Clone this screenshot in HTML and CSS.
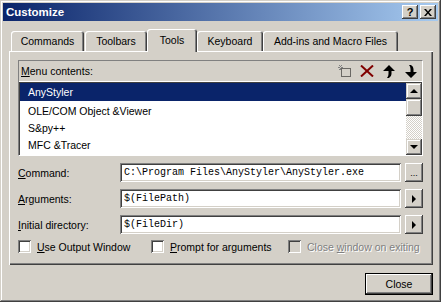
FILE: index.html
```html
<!DOCTYPE html>
<html lang="en">
  <head>
    <meta charset="UTF-8" />
    <title>Customize</title>
    <link rel="stylesheet" href="styles.css">
  </head>
  <body>
    <div class="window">
      <div class="titlebar">
        <span class="title">Customize</span>
        <div class="caption-btns">
          <span class="cap-btn help">?</span>
          <span class="cap-btn">
            <svg width="8" height="7" viewBox="0 0 8 7">
              <path d="M0 0h2l2 2.5L6 0h2L5 3.5 8 7H6L4 4.5 2 7H0l3-3.5z" fill="#000" />
            </svg>
          </span>
        </div>
      </div>

      <div class="client">
        <div class="tabs">
          <div class="tab tab-commands">Commands</div>
          <div class="tab tab-toolbars">Toolbars</div>
          <div class="tab tab-tools active">Tools</div>
          <div class="tab tab-keyboard">Keyboard</div>
          <div class="tab tab-addins">Add-ins and Macro Files</div>
        </div>

        <div class="panel">
          <div class="frame">
            <div class="frame-head">
              <span class="frame-label"><u>M</u>enu contents:</span>
              <div class="tools">
                <span class="tool">
                  <svg width="14" height="12" viewBox="0 0 14 12">
                    <rect x="3.5" y="3.5" width="9" height="8" fill="none" stroke="#000" stroke-dasharray="1 1" />
                    <path d="M1 0.5h1M3 0.5h1M2.5 1v1M0 2.5h2M3 2.5h2M2.5 3v2M1 4.5h1" stroke="#808080" />
                  </svg>
                </span>
                <span class="tool">
                  <svg width="14" height="12" viewBox="0 0 14 12">
                    <path d="M1 0.5l12 11M13 0.5l-12 11" stroke="#800000" stroke-width="2" />
                  </svg>
                </span>
                <span class="tool">
                  <svg width="12" height="13" viewBox="0 0 12 13">
                    <path d="M6 0L12 6H8.5V9Q8.5 11.5 6 13H4Q5.5 11.5 5.5 9V6H0Z" fill="#000" />
                  </svg>
                </span>
                <span class="tool">
                  <svg width="12" height="13" viewBox="0 0 12 13">
                    <path d="M6 13L12 7H8.5V4Q8.5 1.5 6 0H4Q5.5 1.5 5.5 4V7H0Z" fill="#000" />
                  </svg>
                </span>
              </div>
            </div>
            <div class="list">
              <ul class="items">
                <li class="item selected">AnyStyler</li>
                <li class="item">OLE/COM Object &amp;Viewer</li>
                <li class="item">S&amp;py++</li>
                <li class="item">MFC &amp;Tracer</li>
              </ul>
              <div class="scrollbar">
                <span class="sb-btn"><i class="arrow-up"></i></span>
                <span class="sb-thumb"></span>
                <span class="sb-track"></span>
                <span class="sb-btn"><i class="arrow-down"></i></span>
              </div>
            </div>
          </div>

          <div class="fields">
            <div class="field">
              <span class="field-label"><u>C</u>ommand:</span>
              <span class="input">C:\Program Files\AnyStyler\AnyStyler.exe</span>
              <span class="side-btn dots">...</span>
            </div>
            <div class="field">
              <span class="field-label"><u>A</u>rguments:</span>
              <span class="input">$(FilePath)</span>
              <span class="side-btn"><i class="arrow-right"></i></span>
            </div>
            <div class="field">
              <span class="field-label"><u>I</u>nitial directory:</span>
              <span class="input">$(FileDir)</span>
              <span class="side-btn"><i class="arrow-right"></i></span>
            </div>
          </div>

          <div class="checks">
            <label class="check check-output"><span class="box"></span><span><u>U</u>se Output Window</span></label>
            <label class="check check-prompt"><span class="box"></span><span><u>P</u>rompt for arguments</span></label>
            <label class="check disabled"><span class="box"></span><span>Close <u>w</u>indow on exiting</span></label>
          </div>
        </div>

        <div class="footer">
          <button class="btn-close">Close</button>
        </div>
      </div>
    </div>
  </body>
</html>
```

FILE: styles.css
```css
* {
  box-sizing: border-box;
}
html,
body {
  margin: 0;
  padding: 0;
  background: #d4d0c8;
}
body {
  font-family: "Liberation Sans", Arial, sans-serif;
  font-size: 10.5px;
  color: #000;
}

.window {
  width: 441px;
  height: 302px;
  padding: 3px;
  background: #d4d0c8;
  display: flex;
  flex-direction: column;
  box-shadow: inset -1px -1px #404040, inset 1px 1px #d4d0c8,
    inset -2px -2px #808080, inset 2px 2px #fff;
}

/* title bar */
.titlebar {
  height: 18px;
  flex: none;
  display: flex;
  align-items: center;
  justify-content: space-between;
  padding: 0 2px 0 2px;
  background: linear-gradient(to right, #0a246a, #a6caf0);
}
.title {
  color: #fff;
  font-weight: bold;
  font-size: 11.5px;
  padding-left: 1px;
}
.caption-btns {
  display: flex;
  gap: 2px;
}
.cap-btn {
  width: 16px;
  height: 14px;
  display: flex;
  align-items: center;
  justify-content: center;
  background: #d4d0c8;
  box-shadow: inset -1px -1px #404040, inset 1px 1px #fff,
    inset -2px -2px #808080;
}
.cap-btn.help {
  font-weight: bold;
  font-size: 11px;
  line-height: 14px;
}

/* client area */
.client {
  flex: 1;
  display: flex;
  flex-direction: column;
  padding: 8px 5px 0 6px;
}

.tabs {
  height: 22px;
  display: flex;
  align-items: flex-end;
  margin-left: 2px;
  position: relative;
  z-index: 1;
}
.tab {
  height: 20px;
  display: flex;
  align-items: center;
  justify-content: center;
  background: #d4d0c8;
  border-radius: 3px 3px 0 0;
  box-shadow: inset 1px 1px #fff, inset -1px 0 #404040, inset -2px 0 #808080;
}
.tab.active {
  height: 23px;
  margin-bottom: -1px;
  padding-bottom: 2px;
}
.tab-commands {
  width: 73px;
  margin-right: 1px;
}
.tab-toolbars {
  width: 62px;
}
.tab-tools {
  width: 50px;
}
.tab-keyboard {
  width: 66px;
}
.tab-addins {
  width: 135px;
}

.panel {
  width: 424px;
  height: 214px;
  padding: 9px;
  display: flex;
  flex-direction: column;
  box-shadow: inset 1px 1px #fff, inset -1px -1px #404040,
    inset -2px -2px #808080;
}

/* menu contents list */
.frame {
  width: 405px;
  height: 96px;
  border: 1px solid;
  border-color: #808080 #fff #fff #808080;
  display: flex;
  flex-direction: column;
}
.frame-head {
  height: 21px;
  flex: none;
  display: flex;
  align-items: center;
  justify-content: space-between;
  padding-left: 2px;
  border-bottom: 1px solid #fff;
}
.tools {
  display: flex;
}
.tool {
  width: 22px;
  height: 20px;
  display: flex;
  align-items: center;
  justify-content: center;
}

.list {
  flex: 1;
  display: flex;
  background: #fff;
  border-top: 1px solid #404040;
  border-left: 1px solid #404040;
}
.items {
  flex: 1;
  list-style: none;
  margin: 0;
  padding: 0;
}
.item {
  height: 17px;
  line-height: 17px;
  padding-left: 8px;
}
.item.selected {
  height: 18px;
  line-height: 18px;
  margin-bottom: 2px;
  background: #0a246a;
  color: #fff;
}

.scrollbar {
  width: 16px;
  display: flex;
  flex-direction: column;
}
.sb-btn,
.sb-thumb {
  background: #d4d0c8;
  box-shadow: inset -1px -1px #404040, inset 1px 1px #d4d0c8,
    inset -2px -2px #808080, inset 2px 2px #fff;
}
.sb-btn {
  height: 16px;
  display: flex;
  align-items: center;
  justify-content: center;
}
.sb-thumb {
  height: 17px;
}
.sb-track {
  flex: 1;
  background: repeating-conic-gradient(#fff 0 25%, #d4d0c8 0 50%) 0 0 / 2px 2px;
}
.arrow-up,
.arrow-down {
  width: 0;
  height: 0;
  border-left: 4px solid transparent;
  border-right: 4px solid transparent;
}
.arrow-up {
  border-bottom: 4px solid #000;
}
.arrow-down {
  border-top: 4px solid #000;
}
.arrow-right {
  width: 0;
  height: 0;
  border-top: 4px solid transparent;
  border-bottom: 4px solid transparent;
  border-left: 4px solid #000;
}

/* command fields */
.fields {
  margin-top: 7px;
  display: flex;
  flex-direction: column;
  gap: 7px;
}
.field {
  height: 19px;
  display: flex;
  align-items: center;
}
.field-label {
  width: 102px;
}
.input {
  width: 281px;
  height: 19px;
  padding-left: 4px;
  line-height: 19px;
  background: #fff;
  font-family: "Liberation Mono", "Courier New", monospace;
  font-size: 10px;
  white-space: nowrap;
  overflow: hidden;
  box-shadow: inset 1px 1px #808080, inset -1px -1px #fff,
    inset 2px 2px #404040, inset -2px -2px #d4d0c8;
}
.side-btn {
  width: 18px;
  height: 19px;
  margin-left: 4px;
  display: flex;
  align-items: center;
  justify-content: center;
  box-shadow: inset -1px -1px #404040, inset 1px 1px #fff,
    inset -2px -2px #808080;
}
.side-btn.dots {
  align-items: flex-end;
  padding-bottom: 4px;
  font-size: 9px;
  line-height: 9px;
}

/* checkboxes */
.checks {
  margin-top: 6px;
  display: flex;
}
.check {
  display: flex;
  align-items: center;
  gap: 6px;
}
.check-output {
  width: 133px;
}
.check-prompt {
  width: 137px;
}
.box {
  width: 13px;
  height: 13px;
  background: #fff;
  box-shadow: inset 1px 1px #808080, inset -1px -1px #fff,
    inset 2px 2px #404040, inset -2px -2px #d4d0c8;
}
.check.disabled {
  color: #808080;
  text-shadow: 1px 1px #fff;
}
.check.disabled .box {
  background: #d4d0c8;
}

/* footer */
.footer {
  display: flex;
  justify-content: flex-end;
  margin-top: 8px;
}
.btn-close {
  width: 68px;
  height: 22px;
  border: 1px solid #000;
  background: #d4d0c8;
  font-family: "Liberation Sans", Arial, sans-serif;
  font-size: 10.5px;
  color: #000;
  box-shadow: inset -1px -1px #404040, inset 1px 1px #fff,
    inset -2px -2px #808080;
}
```
